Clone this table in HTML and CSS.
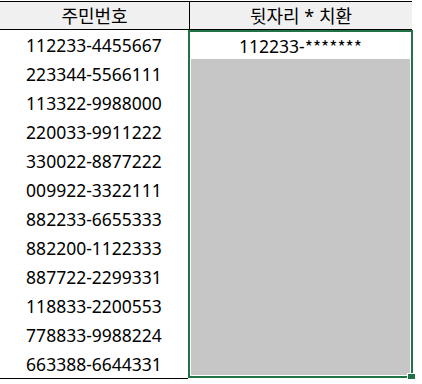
FILE: index.html
```html
<!DOCTYPE html>
<html lang="ko">
<head>
<meta charset="utf-8">
<title>주민번호 치환</title>
<link rel="stylesheet" href="styles.css">
</head>
<body>
<div class="sheet">
  <div class="head">
    <div class="hcell hcell-a">주민번호</div>
    <div class="hcell hcell-b">뒷자리 * 치환</div>
  </div>
  <div class="body">
    <div class="col-a">
      <div class="cell">112233-4455667</div>
      <div class="cell">223344-5566111</div>
      <div class="cell">113322-9988000</div>
      <div class="cell">220033-9911222</div>
      <div class="cell">330022-8877222</div>
      <div class="cell">009922-3322111</div>
      <div class="cell">882233-6655333</div>
      <div class="cell">882200-1122333</div>
      <div class="cell">887722-2299331</div>
      <div class="cell">118833-2200553</div>
      <div class="cell">778833-9988224</div>
      <div class="cell">663388-6644331</div>
    </div>
    <div class="selection">
      <div class="active-cell">112233-<span class="stars">*******</span></div>
      <div class="range"></div>
      <div class="fill-handle"></div>
    </div>
  </div>
</div>
</body>
</html>
```
FILE: styles.css
```css
html, body {
  margin: 0;
  padding: 0;
  background: #ffffff;
}

.sheet {
  padding-top: 1px;
  font-family: "Noto Sans", "Noto Sans CJK KR", sans-serif;
  font-size: 17.5px;
  color: #000000;
}

.head {
  display: flex;
  width: 412px;
  height: 27px;
  background: #f0f0f0;
  border-top: 1px solid #000000;
  border-bottom: 1px solid #000000;
  font-size: 18px;
}

.hcell {
  display: flex;
  align-items: center;
  justify-content: center;
  line-height: 1;
}

.hcell-a {
  width: 189px;
  border-right: 1px solid #000000;
}

.hcell-b {
  flex: 1;
}

.body {
  display: flex;
  align-items: flex-start;
}

.col-a {
  width: 188px;
  border-bottom: 1px solid #000000;
}

.cell {
  height: 29px;
  display: flex;
  align-items: center;
  justify-content: center;
  padding-top: 1px;
  box-sizing: border-box;
}

.selection {
  position: relative;
  width: 225px;
  height: 348px;
  box-sizing: border-box;
  border: 2px solid #217346;
  display: flex;
  flex-direction: column;
}

.active-cell {
  height: 27px;
  display: flex;
  align-items: center;
  justify-content: center;
  padding-top: 1px;
  box-sizing: border-box;
}

.stars {
  font-family: "Noto Sans CJK KR", sans-serif;
}

.range {
  flex: 1;
  margin: 0 1px 1px 1px;
  background: #c6c6c6;
}

.fill-handle {
  position: absolute;
  right: -5px;
  bottom: -6px;
  width: 7px;
  height: 7px;
  background: #217346;
  border: 1px solid #ffffff;
}
```
